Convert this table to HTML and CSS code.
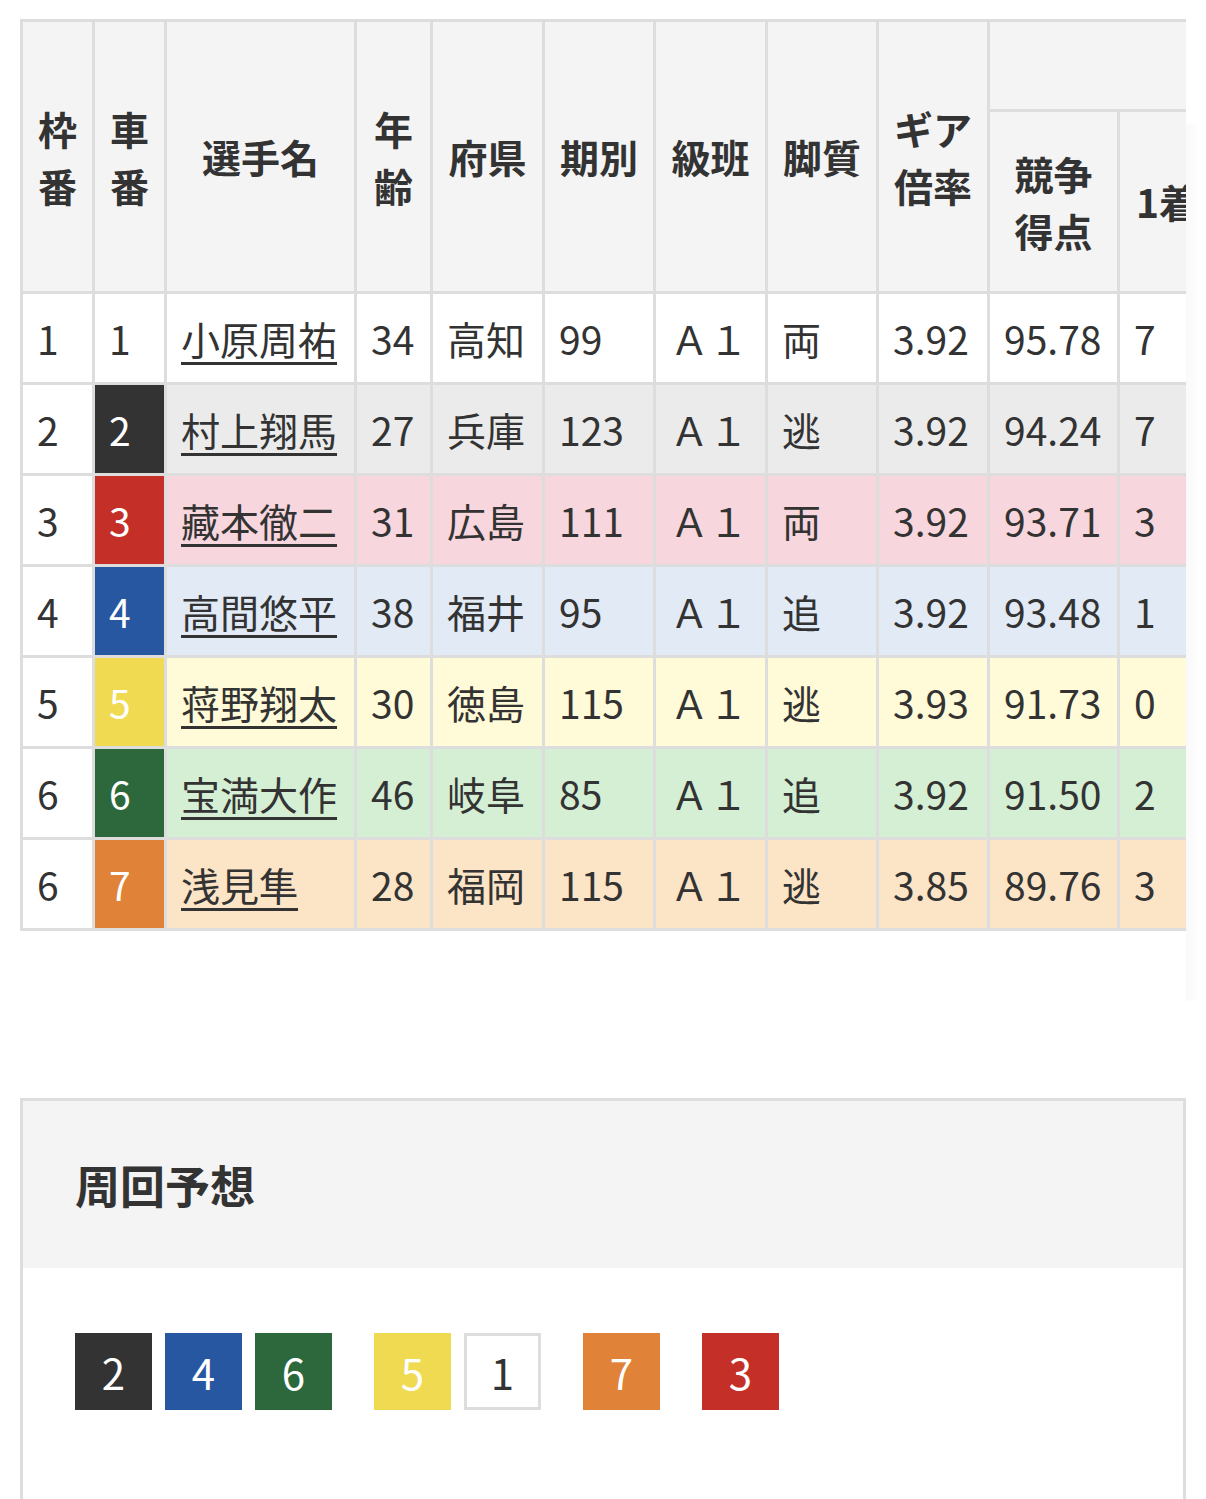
FILE: index.html
```html
<!DOCTYPE html>
<html lang="ja">
<head>
<meta charset="utf-8">
<title>出走表</title>
<link rel="stylesheet" href="styles.css">
</head>
<body>
<div class="table-outer">
  <div class="table-scroll">
    <table class="entries">
      <colgroup>
        <col class="w-waku"><col class="w-sha"><col class="w-name"><col class="w-age">
        <col class="w-pref"><col class="w-term"><col class="w-class"><col class="w-style">
        <col class="w-gear"><col class="w-score"><col class="w-rank"><col class="w-rank">
        <col class="w-rank"><col class="w-rank">
      </colgroup>
      <thead>
        <tr class="h1">
          <th rowspan="2">枠番</th>
          <th rowspan="2">車番</th>
          <th rowspan="2">選手名</th>
          <th rowspan="2">年齢</th>
          <th rowspan="2">府県</th>
          <th rowspan="2">期別</th>
          <th rowspan="2">級班</th>
          <th rowspan="2">脚質</th>
          <th rowspan="2">ギア倍率</th>
          <th colspan="5"></th>
        </tr>
        <tr class="h2">
          <th>競争得点</th>
          <th>1着</th>
          <th>2着</th>
          <th>3着</th>
          <th>着外</th>
        </tr>
      </thead>
      <tbody>
        <tr class="r1">
          <td class="waku">1</td><td class="car c1">1</td><td><a href="#">小原周祐</a></td><td>34</td><td>高知</td><td>99</td><td>Ａ１</td><td>両</td><td>3.92</td><td>95.78</td><td>7</td><td>4</td><td>3</td><td>10</td>
        </tr>
        <tr class="r2">
          <td class="waku">2</td><td class="car c2">2</td><td><a href="#">村上翔馬</a></td><td>27</td><td>兵庫</td><td>123</td><td>Ａ１</td><td>逃</td><td>3.92</td><td>94.24</td><td>7</td><td>3</td><td>2</td><td>12</td>
        </tr>
        <tr class="r3">
          <td class="waku">3</td><td class="car c3">3</td><td><a href="#">藏本徹二</a></td><td>31</td><td>広島</td><td>111</td><td>Ａ１</td><td>両</td><td>3.92</td><td>93.71</td><td>3</td><td>5</td><td>4</td><td>11</td>
        </tr>
        <tr class="r4">
          <td class="waku">4</td><td class="car c4">4</td><td><a href="#">高間悠平</a></td><td>38</td><td>福井</td><td>95</td><td>Ａ１</td><td>追</td><td>3.92</td><td>93.48</td><td>1</td><td>6</td><td>5</td><td>10</td>
        </tr>
        <tr class="r5">
          <td class="waku">5</td><td class="car c5">5</td><td><a href="#">蒋野翔太</a></td><td>30</td><td>徳島</td><td>115</td><td>Ａ１</td><td>逃</td><td>3.93</td><td>91.73</td><td>0</td><td>4</td><td>6</td><td>12</td>
        </tr>
        <tr class="r6">
          <td class="waku">6</td><td class="car c6">6</td><td><a href="#">宝満大作</a></td><td>46</td><td>岐阜</td><td>85</td><td>Ａ１</td><td>追</td><td>3.92</td><td>91.50</td><td>2</td><td>3</td><td>4</td><td>14</td>
        </tr>
        <tr class="r7">
          <td class="waku">6</td><td class="car c7">7</td><td><a href="#">浅見隼</a></td><td>28</td><td>福岡</td><td>115</td><td>Ａ１</td><td>逃</td><td>3.85</td><td>89.76</td><td>3</td><td>2</td><td>5</td><td>13</td>
        </tr>
      </tbody>
    </table>
  </div>
</div>

<section class="forecast">
  <h2 class="forecast-title">周回予想</h2>
  <div class="forecast-body">
    <div class="line">
      <div class="group">
        <span class="num c2">2</span><span class="num c4">4</span><span class="num c6">6</span>
      </div>
      <div class="group">
        <span class="num c5">5</span><span class="num c1">1</span>
      </div>
      <div class="group">
        <span class="num c7">7</span>
      </div>
      <div class="group">
        <span class="num c3">3</span>
      </div>
    </div>
  </div>
</section>
</body>
</html>
```

FILE: styles.css
```css
* { box-sizing: border-box; }

body {
  margin: 0;
  padding: 19px 20px 0;
  background: #fff;
  color: #333;
  font-family: "Noto Sans CJK JP", "Noto Sans", sans-serif;
}

.table-outer {
  position: relative;
}

.table-outer::after {
  content: "";
  position: absolute;
  left: 100%;
  top: 104px;
  width: 11px;
  height: 878px;
  background: linear-gradient(to right, rgba(0, 0, 0, 0.025), rgba(0, 0, 0, 0.008));
  border-radius: 4px;
}

.table-scroll {
  width: 1166px;
  overflow: hidden;
}

.entries {
  table-layout: fixed;
  width: 1488px;
  border-collapse: separate;
  border-spacing: 0;
  border-top: 3px solid #ddd;
  border-left: 3px solid #ddd;
  font-size: 39px;
  line-height: 1.46;
}

.w-waku { width: 72px; }
.w-sha { width: 72px; }
.w-name { width: 190px; }
.w-age { width: 76px; }
.w-pref { width: 112px; }
.w-term { width: 111px; }
.w-class { width: 112px; }
.w-style { width: 111px; }
.w-gear { width: 111px; }
.w-score { width: 130px; }
.w-rank { width: 97px; }

.entries th,
.entries td {
  border-right: 3px solid #ddd;
  border-bottom: 3px solid #ddd;
  padding: 0 14px;
  vertical-align: middle;
  overflow: hidden;
}

.entries th {
  background: #f4f4f4;
  font-weight: 700;
  text-align: center;
  color: #333;
}

.entries th.rank-h {
  padding: 0 8px;
}

.entries td {
  text-align: left;
  font-weight: 400;
  white-space: nowrap;
}

.h1 { height: 90px; }
.h2 { height: 182px; }
.entries tbody tr { height: 91px; }

.entries a {
  color: #333;
  text-decoration: underline;
  text-decoration-thickness: 3px;
  text-underline-offset: 7px;
}

.entries td.waku { background: #fff; }

.r1 td { background: #fff; }
.r2 td { background: #ebebeb; }
.r3 td { background: #f7d6dd; }
.r4 td { background: #e1eaf5; }
.r5 td { background: #fffad7; }
.r6 td { background: #d5efd4; }
.r7 td { background: #fce4c6; }

.c1 { background: #fff; color: #333; }
.c2 { background: #333; color: #fff; }
.c3 { background: #c42f28; color: #fff; }
.c4 { background: #2857a1; color: #fff; }
.c5 { background: #f0da52; color: #fff; }
.c6 { background: #2d683c; color: #fff; }
.c7 { background: #e08238; color: #fff; }

.entries td.car.c1 { background: #fff; color: #333; }
.entries td.car.c2 { background: #333; color: #fff; }
.entries td.car.c3 { background: #c42f28; color: #fff; }
.entries td.car.c4 { background: #2857a1; color: #fff; }
.entries td.car.c5 { background: #f0da52; color: #fff; }
.entries td.car.c6 { background: #2d683c; color: #fff; }
.entries td.car.c7 { background: #e08238; color: #fff; }

.forecast {
  margin: 167px 0 0;
  width: 1166px;
  border: 3px solid #ddd;
  border-bottom: none;
}

.forecast-title {
  margin: 0;
  height: 167px;
  display: flex;
  align-items: center;
  padding: 0 52px;
  background: #f4f4f4;
  font-size: 45px;
  font-weight: 700;
  color: #333;
}

.forecast-body {
  padding: 65px 52px 120px;
}

.line {
  display: flex;
  gap: 42px;
}

.group {
  display: flex;
  gap: 13px;
}

.num {
  width: 77px;
  height: 77px;
  display: flex;
  align-items: center;
  justify-content: center;
  font-size: 42px;
  line-height: 1;
}

.num.c1 {
  border: 3px solid #ddd;
  background: #fff;
  color: #333;
}
```
